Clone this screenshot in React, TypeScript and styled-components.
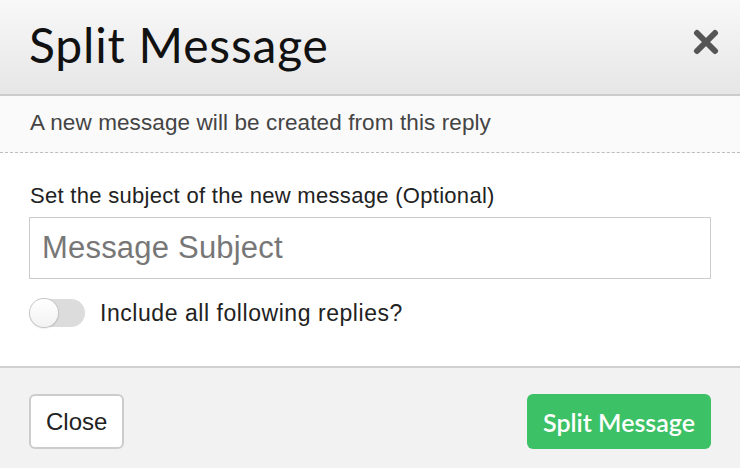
import React, { useState } from "react";
import styled, { createGlobalStyle } from "styled-components";

const Global = createGlobalStyle`
  html, body { margin: 0; padding: 0; background: #fff; }
  body { font-family: "Liberation Sans", Arial, sans-serif; }
  * { box-sizing: border-box; }
`;

const Modal = styled.div`
  width: 740px;
  height: 468px;
  display: flex;
  flex-direction: column;
  background: #fff;
  overflow: hidden;
`;

const Header = styled.div`
  height: 96px;
  flex: none;
  display: flex;
  align-items: center;
  justify-content: space-between;
  padding: 0 20px 0 29px;
  background: linear-gradient(to bottom, #f8f8f8, #e6e6e6);
  border-bottom: 2px solid #cccccc;
`;

const Title = styled.h1`
  margin: 0;
  font-family: Lato, "Open Sans", sans-serif;
  font-weight: 400;
  font-size: 48px;
  line-height: 1;
  color: #111;
  letter-spacing: 0.8px;
  padding-bottom: 4px;
`;

const CloseIcon = styled.button`
  border: 0;
  background: transparent;
  padding: 0;
  width: 28px;
  height: 28px;
  display: flex;
  align-items: center;
  justify-content: center;
  cursor: pointer;
  margin-top: -10px;
`;

const SubHeader = styled.div`
  height: 57px;
  flex: none;
  display: flex;
  align-items: center;
  padding: 0 30px 2px 30px;
  background: #fafafa;
  border-bottom: 1px dashed #bdbdbd;
  font-size: 22.5px;
  letter-spacing: 0.1px;
  color: #444;
`;

const Body = styled.div`
  flex: 1;
  padding: 30px 29px 0 29px;
  display: flex;
  flex-direction: column;
`;

const Label = styled.label`
  font-size: 22px;
  letter-spacing: 0.3px;
  color: #222;
  padding-left: 1px;
  margin-bottom: 8px;
`;

const Input = styled.input`
  height: 62px;
  width: 100%;
  border: 1px solid #cccccc;
  padding: 0 12px;
  font-family: "Liberation Sans", Arial, sans-serif;
  font-size: 31px;
  letter-spacing: 0.2px;
  color: #333;
  outline: none;
  &::placeholder { color: #777; }
`;

const ToggleRow = styled.div`
  display: flex;
  align-items: center;
  gap: 15px;
  margin-top: 20px;
  padding-left: 1px;
  font-size: 23px;
  letter-spacing: 0.55px;
  color: #222;
`;

const Track = styled.button<{ $on: boolean }>`
  position: relative;
  width: 55px;
  height: 28px;
  border-radius: 14px;
  border: 0;
  padding: 0;
  background: ${(p) => (p.$on ? "#3dc166" : "#dcdcdc")};
  cursor: pointer;
  flex: none;
`;

const Knob = styled.span<{ $on: boolean }>`
  position: absolute;
  top: 0;
  left: ${(p) => (p.$on ? "27px" : "0")};
  width: 28px;
  height: 28px;
  border-radius: 50%;
  background: linear-gradient(to bottom, #ffffff, #f2f2f2);
  box-shadow: 0 0 0 1px #c4c4c4, 0 1px 2px rgba(0,0,0,0.2);
`;

const Footer = styled.div`
  height: 102px;
  flex: none;
  display: flex;
  align-items: flex-start;
  justify-content: space-between;
  padding: 26px 29px 0 29px;
  background: #f2f2f2;
  border-top: 2px solid #d0d0d0;
`;

const Button = styled.button<{ $primary?: boolean }>`
  height: 55px;
  padding: 0 ${(p) => (p.$primary ? "16px" : "15px")};
  border-radius: 6px;
  font-size: ${(p) => (p.$primary ? "25px" : "24px")};
  font-family: ${(p) =>
    p.$primary ? 'Lato, "Open Sans", sans-serif' : '"Liberation Sans", Arial, sans-serif'};
  font-weight: ${(p) => (p.$primary ? 600 : 400)};
  border: ${(p) => (p.$primary ? "0" : "2px solid #cccccc")};
  background: ${(p) => (p.$primary ? "#3dc166" : "#fff")};
  color: ${(p) => (p.$primary ? "#fff" : "#222")};
  cursor: pointer;
`;

export default function App() {
  const [on, setOn] = useState(false);
  return (
    <>
      <Global />
      <Modal>
        <Header>
          <Title>Split Message</Title>
          <CloseIcon aria-label="Close">
            <svg width="26" height="26" viewBox="0 0 26 26">
              <path d="M4 4 L22 22 M22 4 L4 22" stroke="#555" strokeWidth="6" strokeLinecap="round" />
            </svg>
          </CloseIcon>
        </Header>
        <SubHeader>A new message will be created from this reply</SubHeader>
        <Body>
          <Label>Set the subject of the new message (Optional)</Label>
          <Input placeholder="Message Subject" />
          <ToggleRow>
            <Track $on={on} onClick={() => setOn(!on)}>
              <Knob $on={on} />
            </Track>
            <span>Include all following replies?</span>
          </ToggleRow>
        </Body>
        <Footer>
          <Button>Close</Button>
          <Button $primary>Split Message</Button>
        </Footer>
      </Modal>
    </>
  );
}
